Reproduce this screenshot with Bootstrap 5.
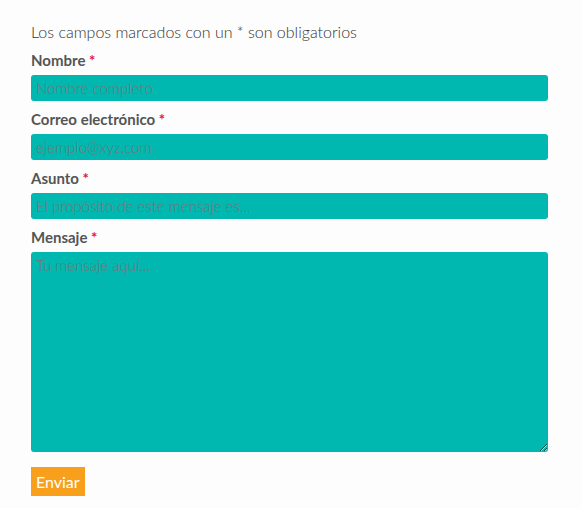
<!DOCTYPE html>
<html lang="es">
<head>
<meta charset="utf-8">
<meta name="viewport" content="width=device-width, initial-scale=1">
<title>Contacto</title>
<link href="https://cdn.jsdelivr.net/npm/bootstrap@5.3.0/dist/css/bootstrap.min.css" rel="stylesheet">
<style>
body { font-family: "Century Gothic", "URW Gothic", Lato, sans-serif; font-size: 15px; line-height: 20px; color: #555; background: #fdfdfd; }
.contact-form { padding: 22px 34px 12px 31px; }
.form-note { font-size: 16px; font-weight: 300; color: #333; }
.contact-form .form-label { font-weight: 700; margin: 0; padding: 4px 0 5px; line-height: 20px; }
.contact-form .required { color: #e02030; }
.contact-form .form-control { background-color: #00b8b0; border: 0; border-radius: 3px; padding: 3px 5px; font-size: 15px; font-weight: 300; line-height: 20px; color: #555; min-height: 26px; }
.contact-form .form-control::placeholder { color: #757575; opacity: 1; }
.contact-form textarea.form-control { height: 200px; resize: both; }
.message-field { margin-bottom: 15px; }
.send-btn { background: #f8a01c; color: #fff; border: 0; border-radius: 0; padding: 4px 5px; font-size: 16px; line-height: 21px; }
.send-btn:hover { background: #e08e10; color: #fff; }
</style>
</head>
<body>
<form class="contact-form">
<p class="form-note mb-1">Los campos marcados con un * son obligatorios</p>
<div class="mb-1"><label class="form-label" for="nombre">Nombre <span class="required">*</span></label>
<input class="form-control" id="nombre" type="text" placeholder="Nombre completo" required></div>
<div class="mb-1"><label class="form-label" for="correo">Correo electrónico <span class="required">*</span></label>
<input class="form-control" id="correo" type="email" placeholder="ejemplo@xyz.com" required></div>
<div class="mb-1"><label class="form-label" for="asunto">Asunto <span class="required">*</span></label>
<input class="form-control" id="asunto" type="text" placeholder="El propósito de este mensaje es..." required></div>
<div class="message-field"><label class="form-label" for="mensaje">Mensaje <span class="required">*</span></label>
<textarea class="form-control" id="mensaje" placeholder="Tu mensaje aquí..." required></textarea></div>
<button class="btn send-btn" type="submit">Enviar</button>
</form>
<script src="https://cdn.jsdelivr.net/npm/bootstrap@5.3.0/dist/js/bootstrap.bundle.min.js"></script>
</body>
</html>
